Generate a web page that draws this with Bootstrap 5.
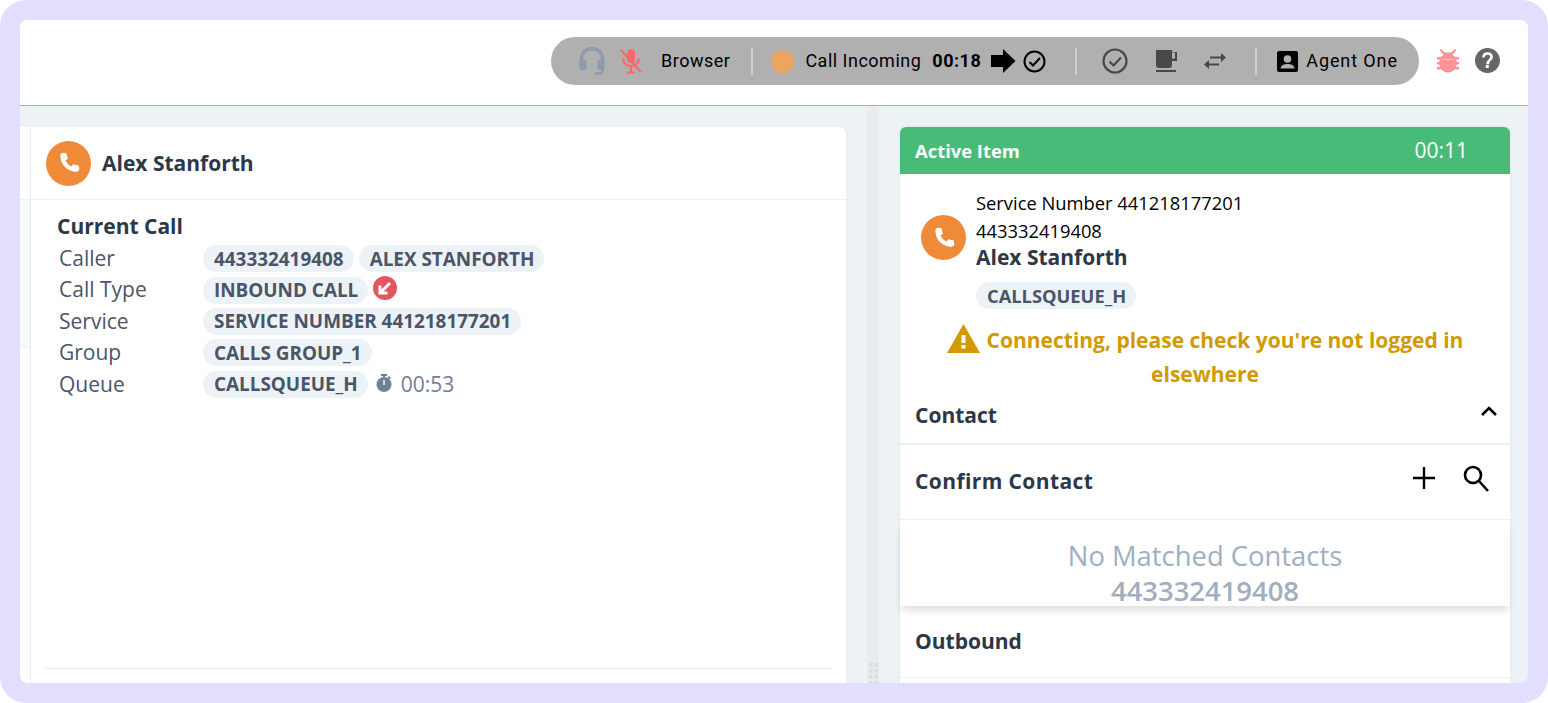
<!DOCTYPE html>
<html lang="en"><head><meta charset="utf-8"><title>Agent</title>
<link href="https://cdn.jsdelivr.net/npm/bootstrap@5.3.0/dist/css/bootstrap.min.css" rel="stylesheet">
<style>
html,body{height:100%;margin:0;overflow:hidden}
body{background:#fff;font-family:"Open Sans",sans-serif;color:#2d3748}
.frame-wrap{height:703px;padding:20px;background:#e2dffc;border-radius:26px}
.app-shell{height:663px;background:#edf2f7;border-radius:8px;overflow:hidden;display:flex;flex-direction:column}
.top-bar{height:86px;flex:none;background:#fff;border-bottom:1px solid #f79f3a;padding-top:17px;padding-right:28px}
.status-pill{height:48px;width:868px;background:#b0b0b0;border-radius:24px;font-family:Roboto,sans-serif;font-size:18px;letter-spacing:.5px;color:#000;padding-left:28px}
.pill-text{margin-bottom:2px}
.agent-name{letter-spacing:.9px}
.sep{width:2px;height:27px;background:#cfcfcf}
.dot{width:23px;height:23px;border-radius:50%;background:#eda460}
.main-row{flex:1;min-height:0;padding-top:21px}
.left-edge{width:11px;flex:none;background:#fff;border-right:1px solid #e9eef3}
.edge-top{height:73px;border-bottom:1px solid #edf2f7}
.edge-mid{height:148px;background:#f7fafc;border-bottom:1px solid #edf2f7}
.left-card{width:815px;flex:none;background:#fff;border-radius:0 6px 0 0;box-shadow:0 1px 3px rgba(0,0,0,.05)}
.left-head{height:73px;border-bottom:1px solid #edf2f7;padding-left:15px;gap:11px;font-size:21px;font-weight:700}
.left-name{padding-top:2px}
.avatar{width:45px;height:45px;border-radius:50%;background:#ee8a38;flex:none}
.call-body{padding:13px 0 0 26px}
.call-title{font-size:21px;font-weight:700;line-height:27px;margin-bottom:3px}
.info-row{height:31.4px;font-size:21px;color:#4a5568;padding-left:2px}
.info-label{width:144px;flex:none}
.tag{display:inline-flex;align-items:center;height:27px;border-radius:14px;background:#edf2f7;color:#4a5568;font-size:18.9px;font-weight:700;padding:0 10px 0 11px;white-space:nowrap}
.tag-side{font-size:18.3px}
.tag-gap{margin-right:5px}
.timer-text{font-size:21px;color:#718096;margin-left:9px}
.left-rule{height:1px;background:#e2e8f0;margin:0 15px 14px}
.gutter{width:54px;flex:none;position:relative}
.split-bar{position:absolute;left:21px;top:-21px;bottom:0;width:12px;background:#e8ecef}
.grip{position:absolute;left:23px;bottom:0}
.right-card{width:610px;flex:none;background:#fff;border-radius:6px 6px 0 0;box-shadow:0 0 3px rgba(0,0,0,.08);display:flex;flex-direction:column}
.active-head{height:47px;flex:none;background:#48bb78;color:#fff;border-radius:6px 6px 0 0;padding:0 42px 0 15px;font-size:18.4px;font-weight:700}
.active-time{font-size:21px;font-weight:400}
.active-info{padding:15px 21px 0;gap:10px}
.active-avatar{margin-top:-23px}
.active-lines{font-size:18.35px;line-height:28px;color:#000}
.active-name{font-size:21px;font-weight:700;color:#2d3748;line-height:25px;margin-bottom:12px}
.warn{color:#d19a00;font-size:21px;font-weight:700;line-height:34px;text-align:center;padding:0 40px;margin-top:14px}
.warn svg{vertical-align:-5px;margin-right:7px}
.section{padding:0 16px 0 15px;font-size:21px;font-weight:700}
.contact-head{height:54px;border-bottom:2px solid #e9eef5;padding-right:12px}
.contact-label{padding-bottom:2px}
.chev{margin-bottom:12px}
.confirm-head{height:75px;border-bottom:1px solid #edf2f7;padding-right:20px}
.confirm-label{letter-spacing:.4px}
.confirm-tools{gap:26px;margin-bottom:8px}
.empty-box{height:86px;text-align:center;color:#a0aec0;font-size:27.4px;line-height:34px;padding-top:19px;box-shadow:0 6px 8px -2px rgba(0,0,0,.14);position:relative;flex:none}
.empty-box b{font-weight:600;display:block;line-height:28px;margin-top:4px}
.outbound{height:72px;border-bottom:1px solid #edf2f7}
</style></head>
<body>
<div class="frame-wrap">
<div class="app-shell">
 <div class="top-bar d-flex justify-content-end">
  <div class="d-flex align-items-start">
   <div class="status-pill d-flex align-items-center">
    <svg width="26" height="29" viewBox="0 0 26 29" fill="none" stroke="#8f9aab" stroke-width="3.6"><path d="M2.500 20V12a10.500 10.500 0 0 1 21 0v8"/><rect x="0.500" y="13" width="7" height="10" rx="2" fill="#8f9aab" stroke="none"/><rect x="18.500" y="13" width="7" height="10" rx="2" fill="#8f9aab" stroke="none"/><path d="M23.500 21v3a2.500 2.500 0 0 1-2.500 2.500h-5" stroke-width="2.600"/></svg>
    <svg width="24" height="26" viewBox="0 0 24 26" fill="none" stroke="#f96b6b" stroke-width="2.200" style="margin-left:14px"><rect x="8" y="1" width="8" height="14" rx="4" fill="#f96b6b" stroke="none"/><path d="M4 10.500c0 4.500 3.500 7.500 8 7.500s8-3 8-7.500M12 18v7M8 24.500h8"/><path d="M2 2l20 22"/></svg>
    <span class="pill-text" style="margin-left:18px">Browser</span>
    <span class="sep" style="margin-left:21px"></span>
    <span class="dot" style="margin-left:18px"></span>
    <span class="pill-text" style="margin-left:11px">Call Incoming</span>
    <b class="pill-text" style="margin-left:11px">00:18</b>
    <svg style="margin-left:10px" width="25" height="24" viewBox="0 0 25 24" fill="#000"><path d="M0 6h12V0l12.500 12L12 24v-6H0z"/></svg>
    <svg style="margin-left:7px" width="23" height="23" viewBox="0 0 23 23" fill="none" stroke="#000" stroke-width="2"><circle cx="11.500" cy="11.500" r="10"/><path d="M6.500 12l3.500 3.500 7-7.500"/></svg>
    <span class="sep" style="margin-left:29px"></span>
    <svg style="margin-left:25px" width="26" height="26" viewBox="0 0 26 26" fill="none" stroke="#484848" stroke-width="2.200"><circle cx="13" cy="13" r="11.500"/><path d="M7.500 13.500l4 4 7.500-8"/></svg>
    <svg style="margin-left:26px" width="24" height="24" viewBox="0 0 24 24" fill="#484848"><path d="M2 1h16v2h5v9h-5v4a3 3 0 0 1-3 3H5a3 3 0 0 1-3-3z"/><rect x="18" y="3.500" width="3" height="6" fill="#b0b0b0"/><rect x="2" y="21" width="20" height="2"/></svg>
    <svg style="margin-left:25px" width="24" height="18" viewBox="0 0 24 18" fill="none" stroke="#484848" stroke-width="2"><path d="M7 5.500h14"/><path d="M18 1l5 4.500-5 4.500z" fill="#484848" stroke="none"/><path d="M3 12.500h13"/><path d="M6 8l-5 4.500L6 17z" fill="#484848" stroke="none"/></svg>
    <span class="sep" style="margin-left:28px"></span>
    <svg style="margin-left:20px" width="21" height="21" viewBox="0 0 21 21"><rect width="21" height="21" rx="2" fill="#000"/><circle cx="10.500" cy="8" r="3.800" fill="#b0b0b0"/><path d="M3.500 17.500c.5-3.500 3.500-4.500 7-4.500s6.500 1 7 4.500z" fill="#b0b0b0"/></svg>
    <span class="pill-text agent-name" style="margin-left:8px">Agent One</span>
   </div>
   <svg style="margin:12px 0 0 18px" width="22" height="24" viewBox="0 0 22 24" fill="#fb9595"><ellipse cx="11" cy="14" rx="9" ry="9.500"/><path d="M4 0l4 3.500h6L18 0l1.300 1.300L15.500 6h-9L2.700 1.300zM0 8h4v2.500H0zM18 8h4v2.500h-4zM0 13h4v2.500H0zM18 13h4v2.500h-4zM0 18h4v2.500H0zM18 18h4v2.500h-4z"/><path d="M4 10.500h14" stroke="#fdbcbc" stroke-width="1"/></svg>
   <svg style="margin:11px 0 0 16px" width="25" height="25" viewBox="0 0 25 25"><circle cx="12.500" cy="12.500" r="12.500" fill="#666"/><path d="M8.500 9.500c0-2.500 1.800-4 4.100-4s4 1.500 4 3.500c0 2.800-3.600 3-3.600 6h-1.500" fill="none" stroke="#fff" stroke-width="2.600"/><rect x="10.800" y="17" width="3" height="3" fill="#fff"/></svg>
  </div>
 </div>
 <div class="main-row d-flex">
  <div class="left-edge"><div class="edge-top"></div><div class="edge-mid"></div></div>
  <div class="left-card d-flex flex-column">
   <div class="left-head d-flex align-items-center">
    <div class="avatar d-flex align-items-center justify-content-center"><svg width="26" height="26" viewBox="0 0 24 24" fill="#fff"><path d="M6.600 2.500l3 .5 1.300 5-2.100 1.800c1 2.400 3 4.400 5.400 5.400l1.800-2.100 5 1.300.5 3c.1 1-.8 2.600-2.500 2.600C10.500 20 4 13.500 4 5c0-1.700 1.600-2.600 2.600-2.500z"/></svg></div>
    <span class="left-name">Alex Stanforth</span>
   </div>
   <div class="call-body flex-grow-1">
    <div class="call-title">Current Call</div>
    <div class="info-row d-flex align-items-center"><span class="info-label">Caller</span><span class="tag tag-gap">443332419408</span><span class="tag">ALEX STANFORTH</span></div>
    <div class="info-row d-flex align-items-center"><span class="info-label">Call Type</span><span class="tag">INBOUND CALL</span>
     <svg style="margin:-5px 0 0 5px" width="24" height="24" viewBox="0 0 24 24"><circle cx="12" cy="12" r="12" fill="#e25660"/><path d="M17 7l-9 9M7 9.500V17h7.500" fill="none" stroke="#fff" stroke-width="3"/></svg></div>
    <div class="info-row d-flex align-items-center"><span class="info-label">Service</span><span class="tag">SERVICE NUMBER 441218177201</span></div>
    <div class="info-row d-flex align-items-center"><span class="info-label">Group</span><span class="tag">CALLS GROUP_1</span></div>
    <div class="info-row d-flex align-items-center"><span class="info-label">Queue</span><span class="tag">CALLSQUEUE_H</span>
     <svg style="margin:-3px 0 0 8px" width="16" height="18" viewBox="0 0 16 18" fill="#718096"><circle cx="8" cy="10.500" r="7.500"/><rect x="5" y="0" width="6" height="2"/><rect x="7" y="1" width="2" height="2"/><path d="M13 2l2 2-1.500 1.500-2-2z"/><rect x="7.300" y="6" width="1.400" height="5" fill="#fff"/></svg>
     <span class="timer-text">00:53</span></div>
   </div>
   <div class="left-rule"></div>
  </div>
  <div class="gutter"><div class="split-bar"></div>
   <svg class="grip" width="9" height="20" viewBox="0 0 9 20" fill="#d9dde0"><rect width="3.500" height="3.500"/><rect x="5.500" width="3.500" height="3.500"/><rect y="6" width="3.500" height="3.500"/><rect x="5.500" y="6" width="3.500" height="3.500"/><rect y="12" width="3.500" height="3.500"/><rect x="5.500" y="12" width="3.500" height="3.500"/><rect y="18" width="3.500" height="2"/><rect x="5.500" y="18" width="3.500" height="2"/></svg>
  </div>
  <div class="right-card">
   <div class="active-head d-flex align-items-center justify-content-between"><span>Active Item</span><span class="active-time">00:11</span></div>
   <div class="active-info d-flex align-items-center">
    <div class="avatar active-avatar d-flex align-items-center justify-content-center"><svg width="26" height="26" viewBox="0 0 24 24" fill="#fff"><path d="M6.600 2.500l3 .5 1.300 5-2.100 1.800c1 2.400 3 4.400 5.400 5.400l1.800-2.100 5 1.300.5 3c.1 1-.8 2.600-2.500 2.600C10.500 20 4 13.500 4 5c0-1.700 1.600-2.600 2.600-2.500z"/></svg></div>
    <div>
     <div class="active-lines">Service Number 441218177201</div>
     <div class="active-lines">443332419408</div>
     <div class="active-name">Alex Stanforth</div>
     <span class="tag tag-side">CALLSQUEUE_H</span>
    </div>
   </div>
   <div class="warn"><svg width="33" height="29" viewBox="0 0 33 29"><path d="M16.500 0L33 29H0z" fill="#d19a00"/><rect x="14.500" y="11" width="4" height="8" fill="#fff"/><rect x="14.500" y="21" width="4" height="3.500" fill="#fff"/></svg>Connecting, please check you're not logged in elsewhere</div>
   <div class="section contact-head d-flex align-items-center justify-content-between"><span class="contact-label">Contact</span><svg class="chev" width="18" height="12" viewBox="0 0 18 12" fill="none" stroke="#000" stroke-width="2.600"><path d="M2 10l7-7 7 7"/></svg></div>
   <div class="section confirm-head d-flex align-items-center justify-content-between"><span class="confirm-label">Confirm Contact</span>
    <div class="confirm-tools d-flex align-items-center"><svg width="24" height="24" viewBox="0 0 24 24" stroke="#000" stroke-width="2.400"><path d="M12 1v22M1 12h22"/></svg><svg width="28" height="28" viewBox="0 0 28 28" fill="none" stroke="#000" stroke-width="2.600"><circle cx="11" cy="11" r="8"/><path d="M17 17l9 10"/></svg></div></div>
   <div class="empty-box">No Matched Contacts<b>443332419408</b></div>
   <div class="section outbound d-flex align-items-center"><span>Outbound</span></div>
  </div>
 </div>
</div>
</div>
<script src="https://cdn.jsdelivr.net/npm/bootstrap@5.3.0/dist/js/bootstrap.bundle.min.js"></script>
</body></html>
